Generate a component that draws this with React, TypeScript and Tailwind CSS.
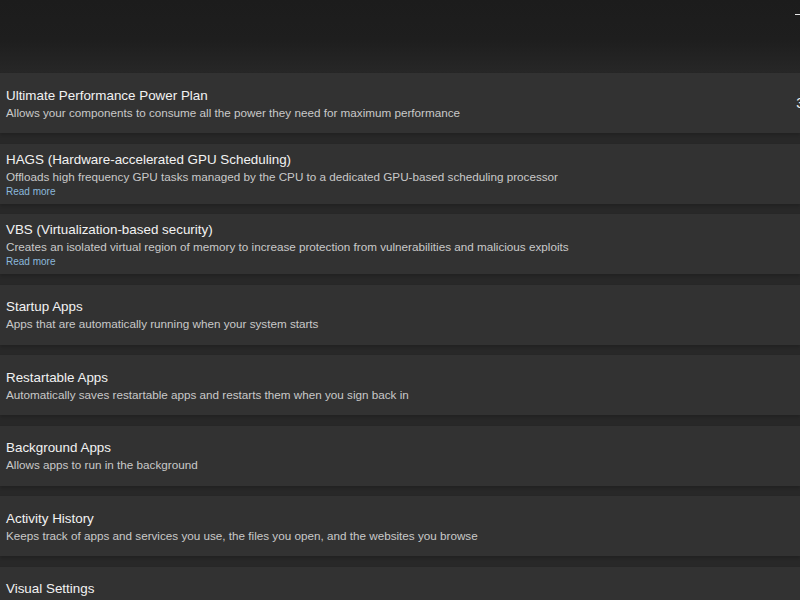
import React from 'react';

type Row = {
  title: string;
  desc: string;
  readMore?: boolean;
  trailing?: string;
};

const rows: Row[] = [
  {
    title: 'Ultimate Performance Power Plan',
    desc: 'Allows your components to consume all the power they need for maximum performance',
    trailing: '3',
  },
  {
    title: 'HAGS (Hardware-accelerated GPU Scheduling)',
    desc: 'Offloads high frequency GPU tasks managed by the CPU to a dedicated GPU-based scheduling processor',
    readMore: true,
  },
  {
    title: 'VBS (Virtualization-based security)',
    desc: 'Creates an isolated virtual region of memory to increase protection from vulnerabilities and malicious exploits',
    readMore: true,
  },
  { title: 'Startup Apps', desc: 'Apps that are automatically running when your system starts' },
  { title: 'Restartable Apps', desc: 'Automatically saves restartable apps and restarts them when you sign back in' },
  { title: 'Background Apps', desc: 'Allows apps to run in the background' },
  {
    title: 'Activity History',
    desc: 'Keeps track of apps and services you use, the files you open, and the websites you browse',
  },
  { title: 'Visual Settings', desc: 'Adjust visual effects and animations' },
];

const SettingRow: React.FC<{ row: Row }> = ({ row }) => (
  <div
    className={`flex items-center justify-between h-[60px] shrink-0 bg-[#323232] pl-[6px] shadow-[0_2px_3px_rgba(0,0,0,0.18)] ${
      row.readMore ? 'pt-[1px]' : 'pt-[1px]'
    }`}
  >
    <div className="flex flex-col justify-center min-w-0">
      <span className="text-[13.4px] leading-[18px] text-[#f2f2f2] whitespace-nowrap">{row.title}</span>
      <span className="text-[11.7px] leading-[16px] text-[#c9c9c9] whitespace-nowrap">{row.desc}</span>
      {row.readMore && (
        <span className="text-[10px] leading-[13px] text-[#8cb9dc] whitespace-nowrap">Read more</span>
      )}
    </div>
    {row.trailing && (
      <span className="text-[14px] text-[#f2f2f2] mr-[-4px] shrink-0">{row.trailing}</span>
    )}
  </div>
);

const App: React.FC = () => {
  return (
    <div
      className="w-[800px] h-[600px] overflow-hidden flex flex-col bg-[#282828]"
      style={{ fontFamily: '"Segoe UI", "Liberation Sans", Arial, sans-serif' }}
    >
      {/* Title strip */}
      <header className="h-[73px] shrink-0 flex justify-end bg-[linear-gradient(to_bottom,#1c1c1c_0%,#1e1e1e_55%,#272727_100%)]">
        <span className="mt-[14px] mr-[-2px] w-[7px] h-[1px] bg-[#e6e6e6]" />
      </header>

      {/* Settings list */}
      <main className="flex flex-col gap-[10.5px]">
        {rows.map((row) => (
          <SettingRow key={row.title} row={row} />
        ))}
      </main>
    </div>
  );
};

export default App;
